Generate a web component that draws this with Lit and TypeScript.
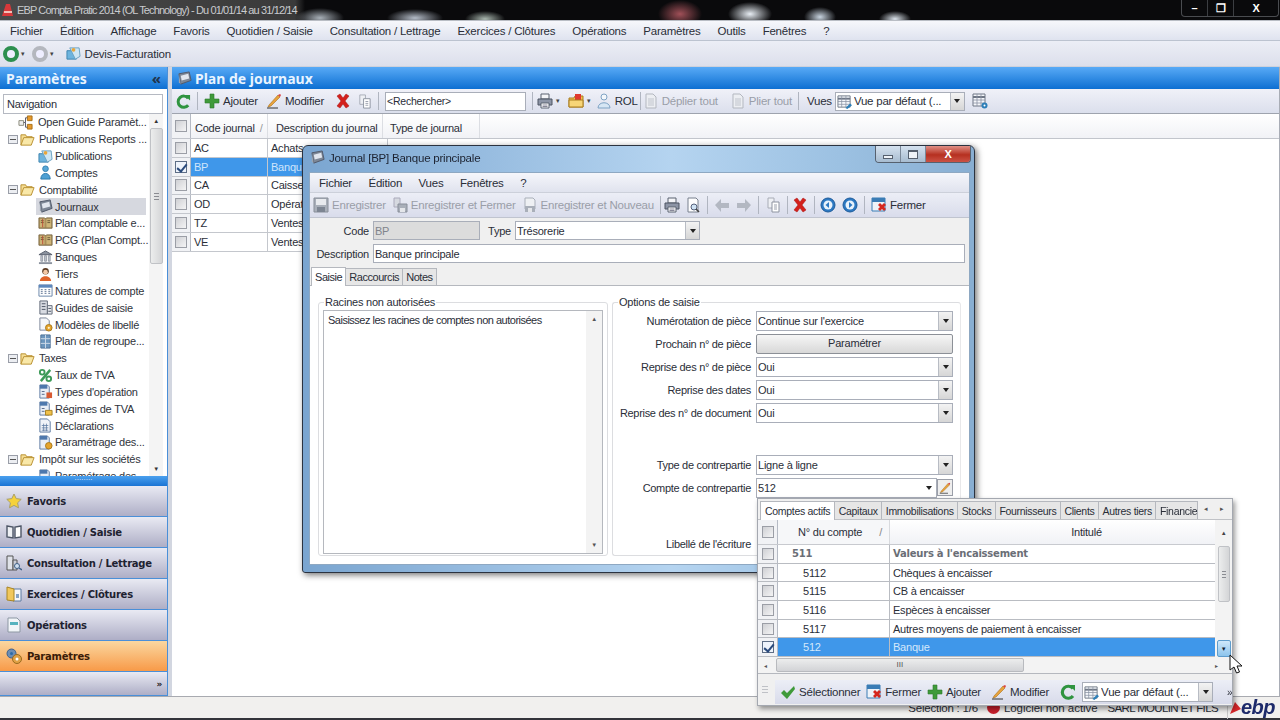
import { LitElement, html, css, svg } from "lit";
import { customElement } from "lit/decorators.js";

const ic = (body: unknown, s = 16) => html`<svg class="ic" width=${s} height=${s} viewBox="0 0 16 16">${body}</svg>`;
const I: Record<string, (s?: number) => unknown> = {
  plus: (s) => ic(svg`<path d="M6 1h4v5h5v4h-5v5H6v-5H1V6h5z" fill="#3f9a3a" stroke="#2b7a2b" stroke-width=".6"/>`, s),
  pencil: (s) => ic(svg`<path d="M3 12 12 2l2 2-9 9-3 1z" fill="#e8a33c" stroke="#a8701c" stroke-width=".6"/><path d="M12 2l2 2 1-2-1-1z" fill="#d44"/><path d="M1 15h11" stroke="#333" stroke-width="1"/>`, s),
  x: (s) => ic(svg`<path d="M2 3l3-2 3 4 3-4 3 2-4 5 4 5-3 2-3-4-3 4-3-2 4-5z" fill="#d3201c" stroke="#a81512" stroke-width=".5"/>`, s),
  copy: (s) => ic(svg`<path d="M3 1h6v10H3z" fill="#eef0f4" stroke="#a8acb6"/><path d="M7 5h7v10H7z" fill="#fff" stroke="#8d93a0"/><path d="M9 8h3M9 10h3M9 12h3" stroke="#9aa0ac"/>`, s),
  ref: (s) => ic(svg`<path d="M13 4.500A6 6 0 1 0 13 12" fill="none" stroke="#2f9440" stroke-width="3.200"/><path d="M9 1h6v6z" fill="#2f9440"/>`, s),
  print: (s) => ic(svg`<path d="M4 1h8v5H4z" fill="#f4f5f8" stroke="#5a6270"/><path d="M1 6h14v6H1z" fill="#8d95a6" stroke="#4c5462"/><path d="M4 10h8v5H4z" fill="#fff" stroke="#5a6270"/><path d="M5.500 12h5M5.500 13.500h5" stroke="#889"/>`, s),
  preview: (s) => ic(svg`<path d="M3 1h8l2 2v12H3z" fill="#fdfdfe" stroke="#79808e"/><circle cx="9" cy="10" r="3" fill="#cfe2f3" stroke="#55607a"/><path d="M11 12l3 3" stroke="#444" stroke-width="1.600"/>`, s),
  folderx: (s) => ic(svg`<path d="M1 5h5l1-2h8v11H1z" fill="#f1c04f" stroke="#a97d1f"/><path d="M7 1h6v6H7z" fill="#e0392f"/><path d="M1 7h14v7H1z" fill="#f7d577" stroke="#a97d1f"/>`, s),
  rol: (s) => ic(svg`<circle cx="8" cy="4" r="3" fill="#f3f7fb" stroke="#7fa3c4"/><path d="M2 15c0-7 12-7 12 0z" fill="#d6e6f4" stroke="#7fa3c4"/>`, s),
  doc: (s) => ic(svg`<path d="M3 1h7l3 3v11H3z" fill="#eceef2" stroke="#b3b7bf"/><path d="M5 6h6M5 8h6M5 10h6M5 12h6" stroke="#c0c4cc"/>`, s),
  grid: (s) => ic(svg`<path d="M1 2h13v12H1z" fill="#f5f7fb" stroke="#6f7785"/><path d="M1 5h13" stroke="#6f7785" stroke-width="2"/><path d="M5 2v12M9.500 2v12M1 8h13M1 11h13" stroke="#8a93a3" stroke-width=".8"/><path d="M9 15l5-5 2 2-5 4z" fill="#2d7fb8"/>`, s),
  gridg: (s) => ic(svg`<path d="M1 1h12v12H1z" fill="#f5f7fb" stroke="#6f7785"/><path d="M1 4h12" stroke="#6f7785" stroke-width="2"/><path d="M5 1v12M9 1v12M1 7h12M1 10h12" stroke="#8a93a3" stroke-width=".8"/><circle cx="12.500" cy="12.500" r="3" fill="#2d7fb8"/><circle cx="12.500" cy="12.500" r="1" fill="#fff"/>`, s),
  save: (s) => ic(svg`<path d="M1 1h14v14H1z" fill="#a9afb9" stroke="#888e99"/><path d="M3 2h10v6H3z" fill="#e8eaee"/><path d="M4 10h8v5H4z" fill="#7d8592"/>`, s),
  savec: (s) => ic(svg`<path d="M2 1h6v9H2z" fill="#d6d9e0" stroke="#aab"/><path d="M6 7h9v8H6z" fill="#a9afb9" stroke="#888e99"/><path d="M8 11h5v4H8z" fill="#e4e6ea"/>`, s),
  saven: (s) => ic(svg`<path d="M3 1h8l2 2v9H3z" fill="#eef0f3" stroke="#a9afb9"/><path d="M3 9h10v6H3z" fill="#a9afb9"/><path d="M6 11h4v4H6z" fill="#e4e6ea"/>`, s),
  back: (s) => ic(svg`<path d="M1 8l6-6v4h8v5H7v4z" fill="#b3b8c2"/>`, s),
  fwd: (s) => ic(svg`<path d="M15 8 9 2v4H1v5h8v4z" fill="#b3b8c2"/>`, s),
  navl: (s) => ic(svg`<circle cx="8" cy="8" r="7" fill="#2b78c2" stroke="#1e5b9a"/><circle cx="8" cy="8" r="4.500" fill="#e8f2fb"/><path d="M9 5 5.500 8 9 11z" fill="#2b78c2"/>`, s),
  navr: (s) => ic(svg`<circle cx="8" cy="8" r="7" fill="#2b78c2" stroke="#1e5b9a"/><circle cx="8" cy="8" r="4.500" fill="#e8f2fb"/><path d="m7 5 3.500 3L7 11z" fill="#2b78c2"/>`, s),
  close: (s) => ic(svg`<path d="M1 1h13v13H1z" fill="#eef3f9" stroke="#3a7cb5"/><path d="M1 1h13v4H1z" fill="#3a7cb5"/><path d="M7 8l2-2 2 2 2-2 2 2-2 2 2 2-2 2-2-2-2 2-2-2 2-2z" fill="#d5281f"/>`, s),
  check: (s) => ic(svg`<path d="M1 9l3-3 3 3 7-7 1 3-8 10z" fill="#3f9a3a"/>`, s),
  journal: (s) => ic(svg`<path d="M2 3l11-2 2 9-11 4z" fill="#7d8796" stroke="#50596a"/><path d="M4 5l8-2 1 5-8 2z" fill="#e1e6ee"/><path d="M2 3v9l2 2z" fill="#9aa3b0"/>`, s),
  folder: (s) => ic(svg`<path d="M1 14V3h5l1 2h6v2" fill="#f5dd94" stroke="#b98f30"/><path d="M1 14l3-8h11l-3 8z" fill="#f9e8a8" stroke="#b98f30"/>`, s),
  guide: (s) => ic(svg`<path d="M1 6h5v5H1z" fill="#eee" stroke="#887"/><path d="M10 1h5v5h-5z" fill="#e69a2d" stroke="#a86f16"/><path d="M10 10h5v5h-5z" fill="#e69a2d" stroke="#a86f16"/><path d="M6 8h2V3h2M8 8v5h2" fill="none" stroke="#556"/>`, s),
  pub: (s) => ic(svg`<path d="M1 5h10v9H1z" fill="#6db4de" stroke="#3d84b0"/><path d="M4 2h10l1 9-5 3z" fill="#cde6f4" stroke="#6aa0c0"/><circle cx="8" cy="4" r="2" fill="#e8a63b"/>`, s),
  acct: (s) => ic(svg`<circle cx="8" cy="4" r="3" fill="#58a8d8" stroke="#3180b0"/><path d="M3 15c0-8 10-8 10 0z" fill="#4da0d4" stroke="#2b78aa"/>`, s),
  book: (s) => ic(svg`<path d="M1 2h6l1 1 1-1h6v11H1z" fill="#a98f5b" stroke="#7c6a44"/><path d="M2 3h5v9H2zM9 3h5v9H9z" fill="#cdb477"/><path d="M3 5h3M3 7h3M10 5h3M10 7h3" stroke="#6a5a3a"/><path d="M5 3v9" stroke="#bd4c37"/>`, s),
  bank: (s) => ic(svg`<path d="M8 1l7 4H1z" fill="#8b929e" stroke="#555d6b"/><path d="M3 6h2v6H3zM7 6h2v6H7zM11 6h2v6h-2z" fill="#c6cad2" stroke="#666e7c" stroke-width=".6"/><path d="M1 13h14v2H1z" fill="#8b929e"/>`, s),
  tiers: (s) => ic(svg`<circle cx="8" cy="4.500" r="3.500" fill="#5a3a22"/><path d="M2 15c0-7 12-7 12 0z" fill="#e0642a"/><circle cx="8" cy="5.500" r="2.500" fill="#f3c8a5"/>`, s),
  cal: (s) => ic(svg`<path d="M1 2h14v12H1z" fill="#fff" stroke="#6683a8"/><path d="M1 2h14v3H1z" fill="#5d87bd"/><path d="M3 7h2M7 7h2M11 7h2M3 9h2M7 9h2M11 9h2M3 11h2M7 11h2M11 11h2" stroke="#7d8ea8" stroke-width="1.200"/>`, s),
  build: (s) => ic(svg`<path d="M2 1h8v14H2z" fill="#d8dbe2" stroke="#5e6675"/><path d="M10 6h5v9h-5z" fill="#e8eaee" stroke="#5e6675"/><path d="M4 4h4M4 7h4M4 10h4M11 9h3M11 12h3" stroke="#4a5262"/>`, s),
  docg: (s) => ic(svg`<path d="M2 1h7l3 3v10H2z" fill="#f4f6fa" stroke="#7a8496"/><circle cx="11.500" cy="11.500" r="3.500" fill="#e5a42d" stroke="#a8771c"/><circle cx="11.500" cy="11.500" r="1.200" fill="#fff3d0"/>`, s),
  plan: (s) => ic(svg`<path d="M3 1h10v14H3z" fill="#6c96bd" stroke="#4c7096"/><path d="M8 1v14M3 5h10M3 10h10" stroke="#cfdcea"/>`, s),
  pct: (s) => ic(svg`<path d="M13 2 3 14" stroke="#3d9a58" stroke-width="2.600"/><circle cx="4.500" cy="4.500" r="2.500" fill="none" stroke="#3d9a58" stroke-width="2"/><circle cx="11.500" cy="11.500" r="2.500" fill="none" stroke="#3d9a58" stroke-width="2"/>`, s),
  types: (s) => ic(svg`<path d="M2 1h8l2 2v12H2z" fill="#e9eef6" stroke="#5b78a0"/><path d="M2 1h8v4H2z" fill="#4e78ad"/><path d="M9 9h6v6H9z" fill="#d85a32"/><path d="M4 8h3M4 11h3" stroke="#55698a"/>`, s),
  regimes: (s) => ic(svg`<path d="M2 1h8l2 2v12H2z" fill="#e9eef6" stroke="#5b78a0"/><path d="M2 1h8v4H2z" fill="#4e78ad"/><path d="M8 10h7v5H8z" fill="#efc04a" stroke="#a8801f"/><path d="M4 8h3M4 11h3" stroke="#55698a"/>`, s),
  decl: (s) => ic(svg`<path d="M2 1h8l3 3v11H2z" fill="#f0f3f8" stroke="#5b78a0"/><path d="M4 8h7M4 10.500h7M4 13h7M6 6v8M9 6v8" stroke="#5b78a0" stroke-width=".8"/>`, s),
  parm: (s) => ic(svg`<path d="M2 1h8l2 2v12H2z" fill="#e9eef6" stroke="#5b78a0"/><path d="M2 1h8v4H2z" fill="#4e78ad"/><circle cx="11.500" cy="11.500" r="3.500" fill="#e5a42d" stroke="#a8771c"/>`, s),
  star: (s) => ic(svg`<path d="M8 1l2.200 4.600 5 .7-3.600 3.500.9 5L8 12.400 3.500 14.800l.9-5L.8 6.300l5-.7z" fill="#f6d23b" stroke="#a9a06a"/>`, s),
  qs: (s) => ic(svg`<path d="M1 2l6 1v11l-6-1z" fill="#eef0f4" stroke="#4d5666" stroke-width="1.400"/><path d="M15 2 9 3v11l6-1z" fill="#fff" stroke="#4d5666" stroke-width="1.400"/>`, s),
  cons: (s) => ic(svg`<path d="M1 1h6v14H1z" fill="#dfe2e8" stroke="#555"/><path d="M7 5h4v10H7z" fill="#c9cdd6" stroke="#555"/><circle cx="11" cy="11" r="2.500" fill="#cfe0f0" stroke="#3d5f86"/><path d="m13 13 3 2" stroke="#3d5f86" stroke-width="1.500"/>`, s),
  ex: (s) => ic(svg`<path d="M7 3h8v12H7z" fill="#f5f7fb" stroke="#5d7ba1"/><path d="M1 1l7 2v12l-7-1z" fill="#f0c75d" stroke="#a98523"/><path d="M10 8h3v4h-3z" fill="#85a3c6"/>`, s),
  op: (s) => ic(svg`<path d="M2 1h9l3 3v11H2z" fill="#f1f5f8" stroke="#8d97a3"/><path d="M4 5h8v3H4z" fill="#56b3bf"/>`, s),
  par: (s) => ic(svg`<circle cx="5.500" cy="5.500" r="4.500" fill="#6d8eb5" stroke="#3e5f88"/><circle cx="5.500" cy="5.500" r="1.500" fill="#2d6ba8"/><circle cx="11" cy="11" r="4.500" fill="#e0a145" stroke="#9a6b1f"/><circle cx="11" cy="11" r="1.500" fill="#fff"/>`, s),
};

const menus = ["Fichier", "Édition", "Affichage", "Favoris", "Quotidien / Saisie", "Consultation / Lettrage", "Exercices / Clôtures", "Opérations", "Paramètres", "Outils", "Fenêtres", "?"];
const tree: [number, string, string][] = [
  [1, "guide", "Open Guide Paramèt..."], [0, "folder", "Publications Reports ..."], [2, "pub", "Publications"], [2, "acct", "Comptes"],
  [0, "folder", "Comptabilité"], [2, "journal", "Journaux"], [2, "book", "Plan comptable e..."], [2, "book", "PCG (Plan Compt..."],
  [2, "bank", "Banques"], [2, "tiers", "Tiers"], [2, "cal", "Natures de compte"], [2, "build", "Guides de saisie"],
  [2, "docg", "Modèles de libellé"], [2, "plan", "Plan de regroupe..."], [0, "folder", "Taxes"], [2, "pct", "Taux de TVA"],
  [2, "types", "Types d'opération"], [2, "regimes", "Régimes de TVA"], [2, "decl", "Déclarations"], [2, "parm", "Paramétrage des..."],
  [0, "folder", "Impôt sur les sociétés"], [2, "parm", "Paramétrage des"],
];
const navs: [string, string][] = [["star", "Favoris"], ["qs", "Quotidien / Saisie"], ["cons", "Consultation / Lettrage"], ["ex", "Exercices / Clôtures"], ["op", "Opérations"], ["par", "Paramètres"]];
const journals = [["AC", "Achats"], ["BP", "Banque"], ["CA", "Caisse"], ["OD", "Opérations"], ["TZ", "Ventes"], ["VE", "Ventes"]];
const accounts: [string, string, number][] = [["511", "Valeurs à l'encaissement", 1], ["5112", "Chèques à encaisser", 2], ["5115", "CB à encaisser", 2], ["5116", "Espèces à encaisser", 2], ["5117", "Autres moyens de paiement à encaisser", 2], ["512", "Banque", 3]];
const popTabs = ["Capitaux", "Immobilisations", "Stocks", "Fournisseurs", "Clients", "Autres tiers"];
const opts1 = [["Numérotation de pièce", "Continue sur l'exercice"], ["Prochain n° de pièce", ""], ["Reprise des n° de pièce", "Oui"], ["Reprise des dates", "Oui"], ["Reprise des n° de document", "Oui"]];

@customElement("app-root")
export class AppRoot extends LitElement {
  static styles = css`
    :host { display: block; width: 1280px; height: 720px; overflow: hidden; position: relative; font: 11px "Liberation Sans", sans-serif; letter-spacing: -.22px; color: #2a2e38; background: #fff; }
    * { box-sizing: border-box; }
    .ic { flex: none; display: block; }
    .page { width: 1280px; height: 720px; display: flex; flex-direction: column; filter: blur(0.35px); }
    .title { height: 20px; flex: none; display: flex; align-items: center; padding-left: 1px; color: #c9cbce; font-size: 11px; gap: 3px; overflow: hidden; background:
      radial-gradient(ellipse 24px 10px at 320px 18px, #a8b0b8, transparent), radial-gradient(ellipse 28px 9px at 415px 18px, #b4bcc8, transparent), radial-gradient(ellipse 20px 8px at 485px 19px, #aab8b0, transparent),
      radial-gradient(ellipse 22px 14px at 680px 14px, #a05058, transparent), radial-gradient(ellipse 22px 12px at 750px 14px, #e8eef4, transparent), radial-gradient(ellipse 16px 10px at 820px 17px, #c8d4e0, transparent), radial-gradient(ellipse 16px 8px at 895px 19px, #dce4ec, transparent),
      linear-gradient(90deg, #4a4a4a 0, #3a3a3a 295px, #0a0a0c 305px, #0a0a0c 100%); }
    .title span { white-space: nowrap; letter-spacing: -.88px; }
    .wbtns { margin-left: auto; margin-right: 1px; display: flex; height: 17px; width: 98px; border: 1px solid #4a4c50; border-top: 0; border-radius: 0 0 4px 4px; color: #fff; align-self: flex-start; }
    .wbtns div { flex: 0 0 26px; display: flex; align-items: center; justify-content: center; border-right: 1px solid #3c3e42; font-weight: 700; }
    .wbtns div:last-child { flex: 1; border: 0; }
    .menubar { height: 21px; flex: none; display: flex; align-items: center; padding-left: 10px; gap: 17px; font-size: 11.500px; background: linear-gradient(#f6f7fb, #dfe3ef); border-bottom: 1px solid #bcc3d0; border-top: 1px solid #b9bdc4; }
    .bar2 { height: 26px; flex: none; display: flex; align-items: center; padding-left: 3px; font-size: 11.500px; gap: 2px; background: linear-gradient(#eceef6, #dcdfeb); border-bottom: 1px solid #cdd1dc; }
    .bar2 .circ.off { margin-left: 5px; }
    .bar2 .ic { margin-left: 10px; }
    .bar2 .lbl { margin-left: 2px; }
    .dd { font-size: 7px; color: #444; }
    .circ { width: 16px; height: 16px; border-radius: 50%; border: 4px solid #2c8f4e; background: #eef; }
    .circ.off { border-color: #b4b7be; }
    .body { flex: 1; min-height: 0; display: flex; background: #d2d6e0; }
    .side { width: 168px; flex: none; display: flex; flex-direction: column; background: #fff; border-right: 1px solid #4a8fd8; }
    .hdr { height: 22px; flex: none; display: flex; align-items: center; padding: 0 6px; background: linear-gradient(#58aaf6, #0d6fd2); color: #e8f4ff; font: 700 14px "Noto Sans", sans-serif; letter-spacing: 0; }
    .hdr .chev { margin-left: auto; font-size: 15px; color: #20324a; line-height: 1; }
    .navbox { margin: 5px 4px 0 3px; height: 20px; flex: none; border: 1px solid #b5b9c2; display: flex; align-items: center; padding-left: 3px; background: #fff; }
    .treewrap { flex: 1; min-height: 0; display: flex; overflow: hidden; }
    .tree { flex: 1; min-width: 0; overflow: hidden; }
    .node { height: 16.850px; display: flex; align-items: center; white-space: nowrap; color: #30343c; }
    .node .ex { width: 10px; height: 9px; border: 1px solid #9a9ea8; background: #eceef2; margin: 0 2px 0 8px; flex: none; position: relative; }
    .node .ex::after { content: ""; position: absolute; left: 1px; right: 1px; top: 3px; height: 1px; background: #555; }
    .node.l0 .ic { margin-right: 4px; }
    .node.l1 { padding-left: 18px; }
    .node.l1 .ic { margin-right: 5px; }
    .node.l2 { padding-left: 38px; }
    .node.l2 .ic { margin-right: 2px; }
    .node.sel { margin-left: 36px; padding-left: 2px; background: #d6d8df; margin-right: 3px; }
    .sb { width: 14px; margin-right: 4px; flex: none; display: flex; flex-direction: column; align-items: center; background: #f4f4f4; }
    .sb .a { height: 14px; font-size: 6px; line-height: 14px; color: #333; }
    .sb .th { width: 13px; height: 136px; background: linear-gradient(90deg, #eceded, #d4d5d7); border: 1px solid #c0c2c6; border-radius: 2px; flex: none; position: relative; }
    .sb .th::after, .pvs .th::after { content: ""; position: absolute; left: 3px; right: 3px; top: calc(50% - 3px); height: 7px; background: repeating-linear-gradient(#8a8c92 0 1px, transparent 1px 3px); }
    .sb .sp { flex: 1; }
    .split { height: 10px; flex: none; background: linear-gradient(#4aa0ee, #1a74d4); display: flex; justify-content: center; color: #e8f0ff; font-size: 8px; line-height: 4px; letter-spacing: 0; }
    .nb { height: 31px; flex: none; display: flex; align-items: center; gap: 5px; padding-left: 6px; font: 700 10px "DejaVu Sans", sans-serif; letter-spacing: -.25px; color: #1e2230; background: linear-gradient(#e9eaf3, #aeaec6); border-bottom: 1px solid #4a8fd8; }
    .nb.on { background: linear-gradient(#fad7a0, #f89a48); color: #3a1c08; }
    .nb.end { height: 24px; justify-content: flex-end; padding-right: 5px; font-size: 9px; color: #222; }
    .main { flex: 1; min-width: 0; margin-left: 4px; display: flex; flex-direction: column; background: #fff; border-right: 1px solid #a9adb6; }
    .main .hdr { padding-left: 5px; gap: 3px; }
    .tb { display: flex; align-items: center; gap: 3px; white-space: nowrap; }
    .tb .sep { width: 1px; height: 18px; background: #b0b5c0; margin: 0 3px; flex: none; }
    .tb .sep.t { margin: 0 -1px; }
    .gap { display: flex; align-items: center; gap: 3px; }
    .dis { color: #9a9ea8; }
    .mn3 { margin-left: -3px; } .mn2 { margin-left: -2px; } .mn1 { margin-left: -1px; }
    .m2 { margin-left: 2px; } .m3 { margin-left: 3px; } .m4 { margin-left: 4px; } .m5 { margin-left: 5px; } .m6 { margin-left: 6px; } .m8 { margin-left: 8px; } .m9 { margin-left: 9px; } .m10 { margin-left: 10px; }
    .tb1 { height: 25px; flex: none; padding-left: 4px; background: linear-gradient(#f0f1f8, #dbdfec); border-bottom: 1px solid #9ea3ae; font-size: 11.500px; }
    .search { width: 141px; height: 18px; font-size: 10.500px; }
    .vues { width: 130px; }
    .input { border: 1px solid #a9aeb9; background: #fff; display: flex; align-items: center; padding-left: 1px; height: 19px; flex: none; }
    .combo { border: 1px solid #a9aeb9; background: #fff; display: flex; align-items: center; height: 19px; padding-left: 1px; gap: 2px; white-space: nowrap; min-width: 0; flex: none; }
    .combo .txt { flex: 1; min-width: 0; overflow: hidden; }
    .combo .arr { width: 14px; height: 100%; flex: none; background: linear-gradient(#f3f3f3, #d6d6d6); border-left: 1px solid #b8bcc4; display: flex; align-items: center; justify-content: center; }
    .combo .arr::after { content: ""; border: 3.500px solid transparent; border-top: 4px solid #222; border-bottom: 0; }
    .combo .arr.bare { border: 0; background: none; }
    .gh { height: 25px; flex: none; display: flex; align-items: center; background: linear-gradient(#fff, #f1f2f6); border-bottom: 1px solid #c2c5cc; white-space: nowrap; }
    .cbcell { width: 19px; height: 100%; display: flex; align-items: center; justify-content: center; flex: none; border-right: 1px solid #b5bac4; background: #f1f2f5; }
    .cb { width: 12px; height: 12px; border: 1px solid #9b9ea6; background: linear-gradient(135deg, #cfd0d4, #f4f4f5); position: relative; }
    .cb.on { background: #eef3fb; border-color: #5e6e86; }
    .cb.on::after { content: ""; position: absolute; left: 3px; top: 0; width: 4px; height: 8px; border: solid #2a4a7c; border-width: 0 2px 2px 0; transform: rotate(40deg); }
    .gh .c { padding: 3px 0 0 4px; display: flex; align-items: center; height: 100%; border-right: 1px solid #dcdee3; }
    .gh .c1 { width: 77px; gap: 5px; } .gh .c1 i { color: #999; font-style: normal; }
    .gh .c2 { width: 115px; padding-left: 8px; }
    .gh .c3 { width: 97px; padding-left: 7px; }
    .gr { height: 18.800px; width: 280px; display: flex; align-items: center; border-bottom: 1px solid #c4c7cd; }
    .gr .c { height: 100%; display: flex; align-items: center; padding-left: 3px; border-right: 1px solid #c4c7cd; overflow: hidden; white-space: nowrap; }
    .gr .c1 { width: 77px; } .gr .c2 { width: 120px; }
    .gr.sel { background: #3f97ea; color: #cfe5fb; }
    .mainbody { flex: 1; min-height: 0; background: #fff; }
    .status { height: 24px; flex: none; background: #f1f0ee; border-top: 1px solid #a8aab0; border-bottom: 2px solid #33343a; display: flex; align-items: center; justify-content: flex-end; padding-right: 5px; gap: 4px; font-size: 11.500px; }
    .status .lg { letter-spacing: -.05px; }
    .status .co { margin-left: 6px; margin-right: 5px; letter-spacing: -.65px; }
    .redc { width: 13px; height: 13px; border-radius: 50%; background: #c8202c; margin-left: 5px; }
    .logo { display: flex; align-items: center; font: italic 700 20px "Liberation Sans", sans-serif; color: #1d2a6a; letter-spacing: -.5px; gap: 0; border-left: 1px solid #c8c8c8; padding-left: 2px; }
    .win { position: absolute; left: 302px; top: 145px; width: 673px; height: 428px; border: 1px solid #2b3340; border-radius: 6px 6px 3px 3px; background: linear-gradient(90deg, #7aa5d0, #b5d4f0 55%, #9cc1e2 80%, #88aed2); box-shadow: 2px 2px 6px rgba(0,0,0,.55); padding: 0 4px 7px 6px; display: flex; flex-direction: column; }
    .wt { height: 26px; flex: none; display: flex; align-items: center; gap: 4px; font-size: 11.500px; color: #1c2230; padding: 0 0 3px 1px; }
    .wb { margin-left: auto; margin-right: -1px; display: flex; height: 17px; align-self: flex-start; border: 1px solid #56616f; border-top: 0; border-radius: 0 0 4px 4px; overflow: hidden; }
    .wb div { width: 25px; display: flex; align-items: center; justify-content: center; background: linear-gradient(#d5e2ef, #a7bcd0); border-right: 1px solid #7a8898; color: #3a4654; font-size: 9px; }
    .wb div.red { width: 44px; border: 0; background: linear-gradient(#e09086, #b63020 55%, #cb5245); color: #fff; font-weight: 700; font-size: 11px; }
    .wb .mi { width: 10px; height: 4px; border: 1px solid #55606e; margin-top: 5px; background: #eef3f8; }
    .wb .ma { width: 10px; height: 9px; border: 1px solid #55606e; background: #eef3f8; box-shadow: inset 0 1px 0 #55606e; }
    .wc { flex: 1; min-height: 0; background: #f0f0f0; border: 1px solid #8ea8c2; display: flex; flex-direction: column; }
    .dm { height: 20px; flex: none; display: flex; align-items: center; gap: 16.500px; padding-left: 9px; background: linear-gradient(#f5f6fb, #e0e3ee); border-bottom: 1px solid #ccd0da; font-size: 11.500px; }
    .dt { height: 25px; flex: none; padding-left: 3px; background: linear-gradient(#eceef6, #d9dceb); border-bottom: 1px solid #c0c4cf; font-size: 11.500px; }
    .f1 { display: flex; align-items: center; height: 19px; margin-top: 3px; font-size: 11px; flex: none; }
    .f1.d { margin-top: 4px; }
    .f1 label { width: 59px; text-align: right; margin-right: 4px; }
    .f1 label.ty { width: 31px; margin: 0 4px 0 0; }
    .ro { width: 107px; background: #dcdcdc; color: #80848c; }
    .tycb { width: 185px; }
    .desc { width: 592px; }
    .tabs { display: flex; align-items: flex-end; height: 19px; margin-top: 4px; padding-left: 1px; flex: none; border-bottom: 1px solid #b5b8be; letter-spacing: -.45px; }
    .tab { padding: 0 3px; height: 17px; border: 1px solid #b5b8be; border-bottom: 0; background: #e6e6e6; display: flex; align-items: center; margin-left: -1px; white-space: nowrap; }
    .tab.on { background: #fff; height: 19px; margin-bottom: -1px; padding: 0 3px; margin-left: 0; position: relative; z-index: 1; }
    .tabc { flex: 1; min-height: 0; background: #fff; display: flex; padding: 16px 8px 8px 8px; gap: 4px; }
    .grp { position: relative; border: 1px solid #dcdde0; border-radius: 3px; padding: 7px 4px 1px; display: flex; }
    .grp > .leg { position: absolute; left: 5px; top: -7px; background: #fff; padding: 0 1px; line-height: 13px; }
    .g1 { width: 290px; flex: none; }
    .list { flex: 1; border: 1px solid #b5b8be; background: #fff; padding: 3px 4px; display: flex; }
    .list .t { flex: 1; letter-spacing: -.5px; }
    .list .vsb { width: 16px; display: flex; flex-direction: column; justify-content: space-between; align-items: center; font-size: 6px; background: #f3f3f3; padding: 5px 0; margin: -3px -4px -3px 0; color: #555; }
    .g2 { flex: 1; flex-direction: column; padding: 6px 0 0 0; border-right-color: #e8e8ea; }
    .row { display: flex; align-items: center; height: 23px; flex: none; }
    .row label { width: 138px; text-align: right; margin-right: 5px; white-space: nowrap; flex: none; letter-spacing: -.3px; }
    .row .combo, .row .btn { width: 197px; flex: none; height: 20px; }
    .row .combo.short { width: 181px; }
    .row.lib { margin-top: 33.500px; }
    .btn { border: 1px solid #8c9097; border-radius: 2px; background: linear-gradient(#f6f6f6, #d8d8d8); text-align: center; line-height: 17px; }
    .spacer { flex: none; height: 29px; }
    .edit { width: 16px; height: 17px; border: 1px solid #9a9ea8; flex: none; background: #eee; display: flex; align-items: center; justify-content: center; }
    .pop { position: absolute; left: 757px; top: 498px; width: 476px; height: 208px; border: 1px solid #a4a8b0; background: #f0f0f0; box-shadow: 2px 3px 5px rgba(0,0,0,.4); display: flex; flex-direction: column; overflow: hidden; }
    .ptabs { height: 21px; flex: none; display: flex; align-items: flex-end; padding-left: 2px; border-bottom: 1px solid #c0c2c6; font-size: 10.500px; letter-spacing: -.3px; position: relative; }
    .ptabs .tab { height: 18px; padding: 0 3.500px; }
    .ptabs .tab.on { height: 19px; padding: 0 4px; }
    .ptabs .arrs { margin-left: auto; width: 32px; height: 100%; display: flex; gap: 12px; align-items: center; font-size: 7px; color: #555; background: #f0f0f0; position: relative; padding-left: 4px; }
    .ptabs .clip { max-width: 43px; overflow: hidden; justify-content: flex-start; }
    .pmain { flex: 1; min-height: 0; display: flex; background: #fff; flex-direction: column; }
    .pgrid { flex: 1; min-height: 0; display: flex; }
    .pcols { flex: 1; min-width: 0; }
    .ph { height: 25px; display: flex; background: linear-gradient(#fff, #f1f2f6); border-bottom: 1px solid #c8cacf; }
    .ph .cc { width: 112px; display: flex; align-items: center; padding-left: 20px; gap: 17px; border-right: 1px solid #d8dade; background: #f6f7f9; white-space: nowrap; }
    .ph .cc i { font-style: normal; color: #888; }
    .ph .ti { flex: 1; text-align: center; line-height: 25px; padding-left: 68px; }
    .pr { height: 18.700px; display: flex; border-bottom: 1px solid #b9bcc2; align-items: center; }
    .pr .cbcell, .ph .cbcell { width: 20px; }
    .pr .n { width: 112px; height: 100%; display: flex; align-items: center; border-right: 1px solid #b9bcc2; }
    .pr .n.h { padding-left: 14px; }
    .pr .n.c { padding-left: 25px; }
    .pr .t { padding-left: 3px; }
    .pr.h { font: 700 10px "DejaVu Sans", sans-serif; color: #6a6e76; }
    .pr.s { background: #3f97ea; color: #d4e8fb; }
    .pvs { width: 17px; flex: none; background: #f3f3f3; display: flex; flex-direction: column; align-items: center; }
    .pvs .a { height: 26px; line-height: 26px; font-size: 6px; color: #444; }
    .pvs .th { width: 12px; height: 56px; background: linear-gradient(90deg, #eceded, #d4d5d7); border: 1px solid #c0c2c6; border-radius: 2px; position: relative; }
    .pvs .sp { flex: 1; }
    .pvs .dn { width: 14px; height: 17px; background: linear-gradient(#cfe8fb, #8cc4ec); border: 1px solid #5e9ccc; border-radius: 2px; display: flex; align-items: center; justify-content: center; font-size: 6px; color: #123; }
    .phs { height: 17px; flex: none; display: flex; align-items: center; background: #f3f3f3; border-bottom: 1px solid #b5b8be; padding: 0 14px 0 6px; font-size: 6px; color: #555; gap: 9px; }
    .phs .th { width: 248px; height: 14px; background: linear-gradient(#eceded, #d2d3d6); border: 1px solid #b8babe; border-radius: 2px; text-align: center; line-height: 12px; letter-spacing: 0; font-size: 8px; }
    .phs .e { margin-left: auto; }
    .ptb { height: 31px; flex: none; background: #f0f0f0; padding: 6px 0 1px 17px; display: flex; position: relative; }
    .ptb::before { content: ""; position: absolute; left: 4px; top: 12px; width: 6px; height: 7px; background: repeating-linear-gradient(#bfc1c6 0 1px, transparent 1px 3px); }
    .ptb .tb { flex: 1; padding-left: 5px; background: linear-gradient(#eceef6, #d8dbea); font-size: 11.500px; gap: 6px; height: 24px; }
    .ptb .gap { gap: 3px; }
    .ptb .combo { width: 131px; height: 20px; margin-left: 0; }
    .ptb .more { font-size: 10px; margin-left: 8px; }
    .cur { position: absolute; left: 1229px; top: 654px; }
  `;

  private combo(t: string, cls = "") {
    return html`<div class="combo ${cls}"><div class="txt">${t}</div><div class="arr"></div></div>`;
  }

  render() {
    return html`<div class="page">
      <div class="title">
        <svg width="13" height="14" viewBox="0 0 13 14"><path d="M1 13 5 1h4l3 12z" fill="#d8383a"/><path d="M3 8h8v2H3z" fill="#f3c0b8"/></svg>
        <span>EBP Compta Pratic 2014 (OL Technology) - Du 01/01/14 au 31/12/14</span>
        <div class="wbtns"><div>–</div><div>❐</div><div>X</div></div>
      </div>
      <div class="menubar">${menus.map((m) => html`<span>${m}</span>`)}</div>
      <div class="bar2"><div class="circ"></div><span class="dd">▾</span><div class="circ off"></div><span class="dd">▾</span>${I.pub(15)}<span class="lbl">Devis-Facturation</span></div>
      <div class="body">
        <div class="side">
          <div class="hdr">Paramètres<span class="chev">«</span></div>
          <div class="navbox">Navigation</div>
          <div class="treewrap">
            <div class="tree">
              ${tree.map(([l, i, t]) => html`<div class="node l${l} ${t === "Journaux" ? "sel" : ""}">${l === 0 ? html`<span class="ex"></span>` : ""}${I[i](15)}<span>${t}</span></div>`)}
            </div>
            <div class="sb"><div class="a">▲</div><div class="th"></div><div class="sp"></div><div class="a">▼</div></div>
          </div>
          <div class="split">........</div>
          ${navs.map(([i, t]) => html`<div class="nb ${t === "Paramètres" ? "on" : ""}">${I[i](16)}<span>${t}</span></div>`)}
          <div class="nb end">»</div>
        </div>
        <div class="main">
          <div class="hdr">${I.journal(15)}<span>Plan de journaux</span></div>
          <div class="tb tb1">
            <span class="gap">${I.ref(15)}</span><span class="sep"></span>
            <span class="gap">${I.plus()}Ajouter</span><span class="gap m5">${I.pencil()}Modifier</span>
            <span class="gap m8">${I.x()}</span><span class="gap m3">${I.copy(15)}</span><span class="sep"></span>
            <div class="input search">&lt;Rechercher&gt;</div><span class="sep"></span>
            <span class="gap mn2">${I.print()}<span class="dd">▾</span></span><span class="gap m5">${I.folderx()}<span class="dd">▾</span></span>
            <span class="gap m2">${I.rol()}ROL</span><span class="sep t"></span>
            <span class="gap dis">${I.doc()}Déplier tout</span><span class="gap dis m9">${I.doc()}Plier tout</span><span class="sep"></span>
            <span class="m2">Vues</span>
            <div class="combo vues">${I.grid(15)}<div class="txt">Vue par défaut (...</div><div class="arr"></div></div>
            <span class="m4">${I.gridg()}</span>
          </div>
          <div class="gh"><div class="cbcell"><div class="cb"></div></div><div class="c c1">Code journal <i>/</i></div><div class="c c2">Description du journal</div><div class="c c3">Type de journal</div></div>
          ${journals.map(([c, d]) => html`<div class="gr ${c === "BP" ? "sel" : ""}"><div class="cbcell"><div class="cb ${c === "BP" ? "on" : ""}"></div></div><div class="c c1">${c}</div><div class="c c2">${d}</div></div>`)}
          <div class="mainbody"></div>
        </div>
      </div>
      <div class="status">
        <span>Sélection : 1/6</span><span class="redc"></span><span class="lg">Logiciel non activé</span><span class="co">SARL MOULIN ET FILS</span>
        <span class="logo"><svg width="11" height="13" viewBox="0 0 11 13"><path d="M0 13 5 1l6 7z" fill="#d8272b"/></svg>ebp</span>
      </div>
    </div>

    <div class="win">
      <div class="wt">${I.journal(15)}<span>Journal [BP] Banque principale</span><div class="wb"><div><span class="mi"></span></div><div><span class="ma"></span></div><div class="red">X</div></div></div>
      <div class="wc">
        <div class="dm"><span>Fichier</span><span>Édition</span><span>Vues</span><span>Fenêtres</span><span>?</span></div>
        <div class="tb dt">
          <span class="gap dis">${I.save()}Enregistrer</span><span class="gap dis m3">${I.savec()}Enregistrer et Fermer</span><span class="gap dis m3">${I.saven()}Enregistrer et Nouveau</span><span class="sep"></span>
          <span class="mn3">${I.print()}</span><span class="m2">${I.preview()}</span><span class="sep"></span>${I.back()}<span class="m3">${I.fwd()}</span><span class="sep"></span>${I.copy()}<span class="sep"></span><span class="mn2">${I.x()}</span><span class="sep"></span><span class="mn1">${I.navl()}</span><span class="m3">${I.navr()}</span><span class="sep"></span><span class="gap">${I.close()}Fermer</span>
        </div>
        <div class="f1"><label>Code</label><div class="input ro">BP</div><label class="ty">Type</label>${this.combo("Trésorerie", "tycb")}</div>
        <div class="f1 d"><label>Description</label><div class="input desc">Banque principale</div></div>
        <div class="tabs"><div class="tab on">Saisie</div><div class="tab">Raccourcis</div><div class="tab">Notes</div></div>
        <div class="tabc">
          <div class="grp g1"><span class="leg">Racines non autorisées</span><div class="list"><div class="t">Saisissez les racines de comptes non autorisées</div><div class="vsb"><span>▲</span><span>▼</span></div></div></div>
          <div class="grp g2"><span class="leg">Options de saisie</span>
            ${opts1.map(([l, v], i) => html`<div class="row"><label>${l}</label>${i === 1 ? html`<div class="btn">Paramétrer</div>` : this.combo(v)}</div>`)}
            <div class="spacer"></div>
            <div class="row"><label>Type de contrepartie</label>${this.combo("Ligne à ligne")}</div>
            <div class="row"><label>Compte de contrepartie</label><div class="combo short"><div class="txt">512</div><div class="arr bare"></div></div><div class="edit">${I.pencil(12)}</div></div>
            <div class="row lib"><label>Libellé de l'écriture</label></div>
          </div>
        </div>
      </div>
    </div>

    <div class="pop">
      <div class="ptabs"><div class="tab on">Comptes actifs</div>${popTabs.map((t) => html`<div class="tab">${t}</div>`)}<div class="tab clip">Financiers</div><div class="arrs"><span>◂</span><span>▸</span></div></div>
      <div class="pmain">
        <div class="pgrid">
          <div class="pcols">
            <div class="ph"><div class="cbcell"><div class="cb"></div></div><div class="cc"><span>N° du compte</span><i>/</i></div><div class="ti">Intitulé</div></div>
            ${accounts.map(([n, t, k]) => html`<div class="pr ${k === 1 ? "h" : k === 3 ? "s" : ""}"><div class="cbcell"><div class="cb ${k === 3 ? "on" : ""}"></div></div><div class="n ${k === 1 ? "h" : "c"}">${n}</div><div class="t">${t}</div></div>`)}
          </div>
          <div class="pvs"><div class="a">▲</div><div class="th"></div><div class="sp"></div><div class="dn">▼</div></div>
        </div>
        <div class="phs"><span>◂</span><div class="th">III</div><span class="e">▸</span></div>
      </div>
      <div class="ptb"><div class="tb"><span class="gap">${I.check()}Sélectionner</span><span class="gap">${I.close()}Fermer</span><span class="gap">${I.plus()}Ajouter</span><span class="gap m4">${I.pencil()}Modifier</span><span class="gap m5">${I.ref()}</span>
        <div class="combo">${I.grid(15)}<div class="txt">Vue par défaut (...</div><div class="arr"></div></div><span class="more">»</span></div></div>
    </div>
    <svg class="cur" width="13" height="20" viewBox="0 0 13 20"><path d="M1 1v15l4-3 2.500 6 3-1-2.500-6h5z" fill="#fff" stroke="#111"/></svg>`;
  }
}
